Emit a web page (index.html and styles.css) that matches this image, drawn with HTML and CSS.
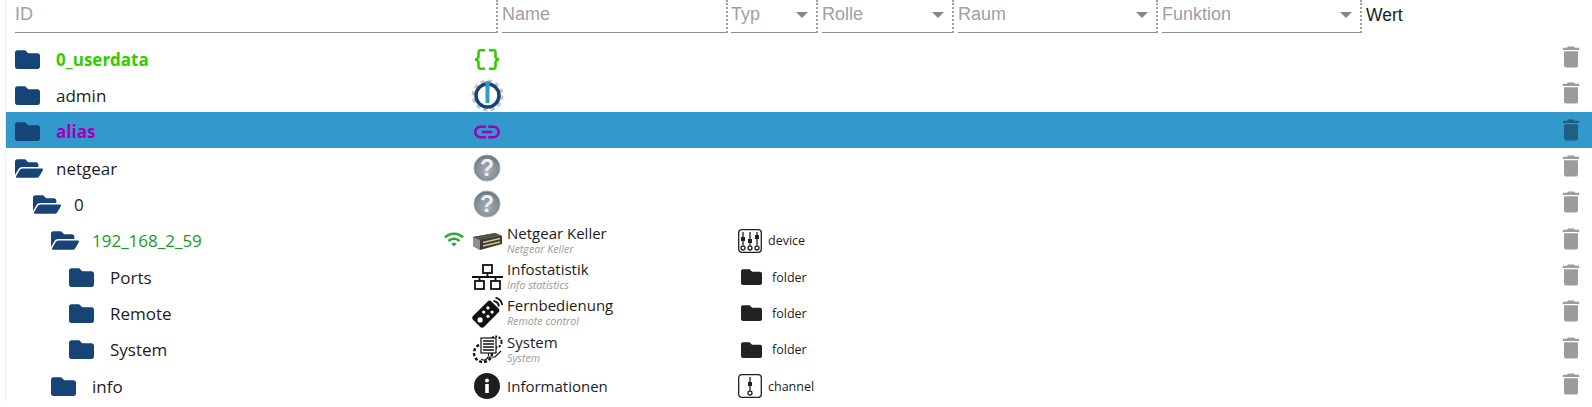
FILE: index.html
```html
<!DOCTYPE html>
<html>

<head>
    <title>Objekte</title>
    <link rel="stylesheet" href="styles.css">
</head>

<body>
    <svg class="defs" width="0" height="0">
        <defs>
            <symbol id="folder" viewBox="0 64 512 384">
                <path d="M464 128H272l-64-64H48C21.49 64 0 85.49 0 112v288c0 26.51 21.49 48 48 48h416c26.51 0 48-21.49 48-48V176c0-26.51-21.49-48-48-48z" />
            </symbol>
            <symbol id="folder-open" viewBox="0 64 576 384">
                <path d="M572.694 292.093L500.27 416.248A63.997 63.997 0 0 1 444.989 448H45.025c-18.523 0-30.064-20.093-20.731-36.093l72.424-124.155A64 64 0 0 1 152 256h399.964c18.523 0 30.064 20.093 20.73 36.093zM152 224h328v-48c0-26.51-21.49-48-48-48H272l-64-64H48C21.49 64 0 85.49 0 112v278.046l69.077-118.418C86.214 242.25 117.989 224 152 224z" />
            </symbol>
            <symbol id="trash" viewBox="0 0 24 24">
                <path d="M6 19c0 1.1.9 2 2 2h8c1.1 0 2-.9 2-2V7H6v12zM19 4h-3.5l-1-1h-5l-1 1H5v2h14V4z" />
            </symbol>
            <radialGradient id="ball" cx="50%" cy="60%" r="65%">
                <stop offset="0" stop-color="#a9b3ba" />
                <stop offset="0.7" stop-color="#7f8990" />
                <stop offset="1" stop-color="#5b6368" />
            </radialGradient>
            <symbol id="question" viewBox="0 0 28 28">
                <circle cx="14" cy="14" r="13" fill="url(#ball)" stroke="#a3a9ad" />
                <text x="14" y="22" class="question-mark">?</text>
            </symbol>
        </defs>
    </svg>

    <div class="objects">
        <div class="filters">
            <div class="filter col-id"><span class="field">ID</span></div>
            <div class="filter col-name"><span class="field">Name</span></div>
            <div class="filter col-typ"><span class="field">Typ<i class="arrow"></i></span></div>
            <div class="filter col-rolle"><span class="field">Rolle<i class="arrow"></i></span></div>
            <div class="filter col-raum"><span class="field">Raum<i class="arrow"></i></span></div>
            <div class="filter col-funktion"><span class="field">Funktion<i class="arrow"></i></span></div>
            <div class="col-wert">Wert</div>
        </div>

        <div class="row">
            <div class="id-cell">
                <svg class="folder"><use href="#folder" /></svg>
                <span class="label user">0_userdata</span>
            </div>
            <div class="name-cell">
                <span class="icon">
                    <svg width="26" height="21" viewBox="0 0 26 21" fill="none" stroke="#33cc00" stroke-width="2.600">
                        <path d="M11 1.300H6.500C5 1.300 4.500 2.300 4.500 3.500V7.500C4.500 9 3 10.500 1 10.500C3 10.500 4.500 12 4.500 13.500V17.500C4.500 18.700 5 19.700 6.500 19.700H11" />
                        <path d="M15 1.300H19.500C21 1.300 21.500 2.300 21.500 3.500V7.500C21.500 9 23 10.500 25 10.500C23 10.500 21.500 12 21.500 13.500V17.500C21.500 18.700 21 19.700 19.500 19.700H15" />
                    </svg>
                </span>
            </div>
            <button class="del"><svg><use href="#trash" /></svg></button>
        </div>

        <div class="row">
            <div class="id-cell">
                <svg class="folder"><use href="#folder" /></svg>
                <span class="label">admin</span>
            </div>
            <div class="name-cell">
                <span class="icon">
                    <svg width="33" height="33" viewBox="0 0 33 33" fill="none">
                        <circle cx="16.500" cy="16.500" r="14" stroke="#c4c4c4" stroke-width="4" stroke-dasharray="4 3.330" />
                        <circle cx="16.500" cy="16.500" r="11.500" fill="#fff" stroke="#164477" stroke-width="3.500" />
                        <rect x="14.500" y="2" width="4" height="22" fill="#3399cc" />
                    </svg>
                </span>
            </div>
            <button class="del"><svg><use href="#trash" /></svg></button>
        </div>

        <div class="row selected">
            <div class="id-cell">
                <svg class="folder"><use href="#folder" /></svg>
                <span class="label alias">alias</span>
            </div>
            <div class="name-cell">
                <span class="icon">
                    <svg width="26" height="14" viewBox="2 6.600 20 10.800" fill="#a000b8">
                        <path d="M3.900 12c0-1.710 1.390-3.100 3.100-3.100h4V7H7c-2.760 0-5 2.240-5 5s2.240 5 5 5h4v-1.900H7c-1.710 0-3.100-1.390-3.100-3.100zM8 13h8v-2H8v2zm9-6h-4v1.900h4c1.710 0 3.100 1.390 3.100 3.100s-1.390 3.100-3.100 3.100h-4V17h4c2.760 0 5-2.240 5-5s-2.240-5-5-5z" />
                    </svg>
                </span>
            </div>
            <button class="del"><svg><use href="#trash" /></svg></button>
        </div>

        <div class="row">
            <div class="id-cell">
                <svg class="folder open"><use href="#folder-open" /></svg>
                <span class="label">netgear</span>
            </div>
            <div class="name-cell">
                <span class="icon"><svg width="28" height="28"><use href="#question" /></svg></span>
            </div>
            <button class="del"><svg><use href="#trash" /></svg></button>
        </div>

        <div class="row level-1">
            <div class="id-cell">
                <svg class="folder open"><use href="#folder-open" /></svg>
                <span class="label">0</span>
            </div>
            <div class="name-cell">
                <span class="icon"><svg width="28" height="28"><use href="#question" /></svg></span>
            </div>
            <button class="del"><svg><use href="#trash" /></svg></button>
        </div>

        <div class="row level-2">
            <div class="id-cell">
                <svg class="folder open"><use href="#folder-open" /></svg>
                <span class="label device-on">192_168_2_59</span>
                <svg class="wifi" viewBox="1 4.500 22 15.500" fill="#35a535">
                    <path d="M1 9l2 2c4.970-4.970 13.030-4.970 18 0l2-2C16.930 2.930 7.080 2.930 1 9zm8 8l3 3 3-3c-1.650-1.660-4.340-1.660-6 0zm-4-4l2 2c2.760-2.760 7.240-2.760 10 0l2-2C15.140 9.140 8.870 9.140 5 13z" />
                </svg>
            </div>
            <div class="name-cell">
                <span class="icon">
                    <svg width="30" height="20" viewBox="0 0 30 20">
                        <path d="M1 6L23 2L30 5V13L8 19L1 15Z" fill="#3a3a3a" />
                        <path d="M1 6L23 2L30 5L8 9Z" fill="#55524a" />
                        <path d="M11 11.500L28 7.500M11 15L28 11" stroke="#d4c987" stroke-width="1.500" />
                        <path d="M1 6L8 9V19L1 15Z" fill="#8f8f8f" />
                    </svg>
                </span>
                <div class="name-text">
                    <div>Netgear Keller</div>
                    <div class="sub">Netgear Keller</div>
                </div>
            </div>
            <div class="role-cell">
                <svg class="role-icon" viewBox="0 0 24 24" fill="none" stroke="#222" stroke-width="1.300">
                    <rect x="0.700" y="0.700" width="22.600" height="22.600" rx="3" />
                    <path d="M5 3V8M5 12V16M12 3V10M12 14V16M19 3V6M19 10V16" />
                    <path d="M3 8H7V12H3ZM10 10H14V14H10ZM17 6H21V10H17Z" fill="#222" stroke="none" />
                    <circle cx="5" cy="19" r="2" />
                    <circle cx="12" cy="19" r="2" />
                    <circle cx="19" cy="19" r="2" />
                </svg>
                <span>device</span>
            </div>
            <button class="del"><svg><use href="#trash" /></svg></button>
        </div>

        <div class="row level-3">
            <div class="id-cell">
                <svg class="folder"><use href="#folder" /></svg>
                <span class="label">Ports</span>
            </div>
            <div class="name-cell">
                <span class="icon">
                    <svg width="31" height="26" viewBox="0 0 31 26" fill="none" stroke="#111" stroke-width="1.800">
                        <rect x="11" y="1" width="9" height="8" />
                        <rect x="3" y="17" width="9" height="8" />
                        <rect x="19" y="17" width="9" height="8" />
                        <path d="M15.500 9V13M0 13H31M7.500 13V17M23.500 13V17" />
                    </svg>
                </span>
                <div class="name-text">
                    <div>Infostatistik</div>
                    <div class="sub">Info statistics</div>
                </div>
            </div>
            <div class="role-cell folder-role">
                <svg class="role-folder"><use href="#folder" /></svg>
                <span>folder</span>
            </div>
            <button class="del"><svg><use href="#trash" /></svg></button>
        </div>

        <div class="row level-3">
            <div class="id-cell">
                <svg class="folder"><use href="#folder" /></svg>
                <span class="label">Remote</span>
            </div>
            <div class="name-cell">
                <span class="icon">
                    <svg width="32" height="32" viewBox="0 0 32 32">
                        <rect x="1.800" y="9.450" width="26" height="15.500" rx="3" transform="rotate(-45 14.800 17.200)" fill="#111" />
                        <circle cx="9.100" cy="22.900" r="2.600" fill="#fff" />
                        <circle cx="17" cy="19.300" r="1.600" fill="#fff" />
                        <circle cx="12.700" cy="15.100" r="1.600" fill="#fff" />
                        <circle cx="21.100" cy="15.100" r="1.600" fill="#fff" />
                        <circle cx="16.900" cy="10.900" r="1.600" fill="#fff" />
                        <path d="M22.500 4C25.500 4.500 27.500 6.500 28 9.500M24.500 0.700C28.500 1.500 30.500 4 31.300 8" fill="none" stroke="#111" stroke-width="1.800" />
                    </svg>
                </span>
                <div class="name-text">
                    <div>Fernbedienung</div>
                    <div class="sub">Remote control</div>
                </div>
            </div>
            <div class="role-cell folder-role">
                <svg class="role-folder"><use href="#folder" /></svg>
                <span>folder</span>
            </div>
            <button class="del"><svg><use href="#trash" /></svg></button>
        </div>

        <div class="row level-3">
            <div class="id-cell">
                <svg class="folder"><use href="#folder" /></svg>
                <span class="label">System</span>
            </div>
            <div class="name-cell">
                <span class="icon">
                    <svg width="31" height="30" viewBox="0 0 31 30" fill="none" stroke="#111" stroke-width="1.200">
                        <circle cx="11" cy="18" r="9" stroke-dasharray="3 2" stroke-width="2.400" />
                        <circle cx="24" cy="7" r="5.500" stroke-dasharray="2 1.500" stroke-width="2" />
                        <rect x="9" y="3" width="15" height="15" fill="#fff" />
                        <path d="M11 6H22M11 9H22M11 12H22M11 15H22" stroke-width="1.500" />
                        <path d="M16.500 18V21M9 24C12 26 15 25 16 22H23L29 16" />
                    </svg>
                </span>
                <div class="name-text">
                    <div>System</div>
                    <div class="sub">System</div>
                </div>
            </div>
            <div class="role-cell folder-role">
                <svg class="role-folder"><use href="#folder" /></svg>
                <span>folder</span>
            </div>
            <button class="del"><svg><use href="#trash" /></svg></button>
        </div>

        <div class="row level-2">
            <div class="id-cell">
                <svg class="folder"><use href="#folder" /></svg>
                <span class="label">info</span>
            </div>
            <div class="name-cell">
                <span class="icon">
                    <svg width="26" height="26" viewBox="0 0 26 26">
                        <circle cx="13" cy="13" r="13" fill="#1e1e1e" />
                        <circle cx="13" cy="7.500" r="2" fill="#fff" />
                        <rect x="11.200" y="11" width="3.600" height="9" fill="#fff" />
                    </svg>
                </span>
                <div class="name-text">Informationen</div>
            </div>
            <div class="role-cell">
                <svg class="role-icon" viewBox="0 0 24 24" fill="none" stroke="#222" stroke-width="1.300">
                    <rect x="0.700" y="0.700" width="22.600" height="22.600" rx="3" />
                    <path d="M12 3V8M12 12V16" />
                    <path d="M10 8H14V12H10Z" fill="#222" stroke="none" />
                    <circle cx="12" cy="19" r="2" />
                </svg>
                <span>channel</span>
            </div>
            <button class="del"><svg><use href="#trash" /></svg></button>
        </div>
    </div>
</body>

</html>
```

FILE: styles.css
```css
body {
    margin: 0;
    background-color: #fff;
    font-family: "Open Sans", "Noto Sans", sans-serif;
    color: #1c1c1c;
    overflow: hidden;
}

.defs {
    display: block;
}

.objects {
    margin-left: 5px;
    border-left: 1px solid #eee;
}

/* Filterzeile */
.filters {
    display: flex;
    height: 39.4px;
    font-family: "Liberation Sans", Arial, sans-serif;
    font-size: 18px;
}

.filter {
    height: 33px;
    border-right: 2px dotted #a0a0a0;
    box-sizing: border-box;
    flex-shrink: 0;
}

.field {
    display: flex;
    justify-content: space-between;
    align-items: center;
    height: 33px;
    padding: 0 8px 3px 0;
    border-bottom: 1px solid #8c8c8c;
    box-sizing: border-box;
    color: #a0a0a0;
}

.col-id {
    width: 492px;
    padding-left: 9px;
}

.col-name {
    width: 230px;
    padding-left: 4px;
}

.col-typ {
    width: 90px;
    padding-left: 3px;
}

.col-rolle {
    width: 136px;
    padding-left: 4px;
}

.col-raum {
    width: 204px;
    padding-left: 4px;
}

.col-funktion {
    width: 204px;
    padding-left: 4px;
}

.col-wert {
    padding: 5px 0 0 4px;
    font-size: 17.5px;
    color: #1c1c1c;
}

.arrow {
    width: 0;
    height: 0;
    border-left: 6px solid transparent;
    border-right: 6px solid transparent;
    border-top: 6px solid #888;
}

/* Zeilen */
.row {
    display: flex;
    align-items: center;
    height: 36.33px;
    padding-top: 3px;
    box-sizing: border-box;
}

.row.selected {
    background-color: #3399cc;
}

.id-cell {
    display: flex;
    align-items: center;
    width: 464px;
    padding-left: 9px;
    box-sizing: border-box;
}

.level-1 .id-cell {
    padding-left: 27px;
}

.level-2 .id-cell {
    padding-left: 45px;
}

.level-3 .id-cell {
    padding-left: 63px;
}

.folder {
    width: 25px;
    height: 19px;
    fill: #164477;
    flex-shrink: 0;
}

.folder.open {
    width: 28px;
    height: 19px;
    margin-right: -3px;
}

.label {
    margin-left: 16px;
    font-size: 17px;
}

.label.user {
    font-weight: bold;
    color: #33cc00;
}

.label.alias {
    font-weight: bold;
    color: #a000b8;
}

.label.device-on {
    color: #1a9a1a;
}

.wifi {
    width: 20px;
    height: 15px;
    margin-left: auto;
    margin-right: 6px;
    margin-bottom: 3px;
}

.name-cell {
    display: flex;
    align-items: center;
    width: 256px;
}

.icon {
    display: flex;
    justify-content: center;
    align-items: center;
    width: 34px;
    flex-shrink: 0;
}

.name-text {
    margin-left: 3px;
    font-size: 15px;
    line-height: 17px;
}

.sub {
    font-size: 10.7px;
    line-height: 15px;
    font-style: italic;
    color: #9a9a9a;
}

.role-cell {
    display: flex;
    align-items: center;
    padding-left: 12px;
    font-size: 12.5px;
}

.role-icon {
    width: 24px;
    height: 24px;
    margin-right: 6px;
}

.folder-role {
    padding-left: 15px;
}

.role-folder {
    width: 21px;
    height: 16px;
    margin-right: 10px;
    fill: #222;
}

.del {
    margin: -4px 7px 0 auto;
    padding: 0;
    width: 28px;
    height: 28px;
    border: none;
    background: none;
    fill: #9c9c9c;
}

.del svg {
    width: 28px;
    height: 28px;
    display: block;
}

.selected .del {
    fill: #1f5f85;
}

.question-mark {
    font-family: "Liberation Sans", Arial, sans-serif;
    font-size: 23px;
    font-weight: bold;
    text-anchor: middle;
    fill: #eef0f1;
}
```
